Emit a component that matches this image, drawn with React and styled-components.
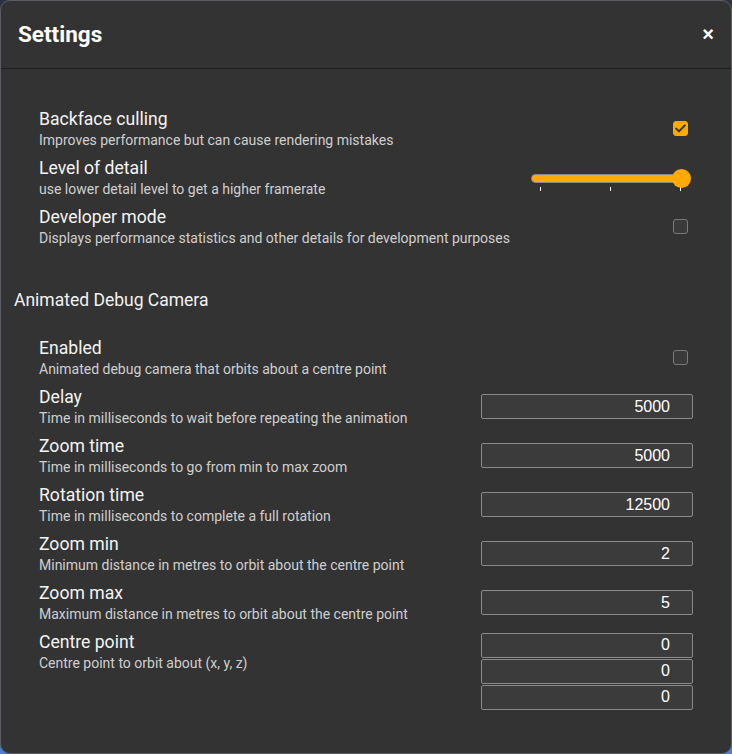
import React from "react";
import styled, { createGlobalStyle } from "styled-components";

const GlobalStyle = createGlobalStyle`
  html, body {
    margin: 0;
    padding: 0;
    height: 100%;
  }
  body {
    background: linear-gradient(180deg, #2b3140 0%, #33415c 60%, #4a7fd8 100%);
    font-family: Roboto, "Noto Sans", sans-serif;
  }
`;

const Dialog = styled.div`
  box-sizing: border-box;
  width: 732px;
  height: 754px;
  background: #333333;
  border: 1px solid #5a5d63;
  border-radius: 10px;
  display: flex;
  flex-direction: column;
  overflow: hidden;
  color: #f2f2f2;
`;

const Header = styled.div`
  height: 68px;
  flex: none;
  display: flex;
  align-items: center;
  justify-content: space-between;
  padding: 0 17px 2px 17px;
  box-sizing: border-box;
  border-bottom: 1px solid #1e1e1e;
`;

const Title = styled.h1`
  margin: 0;
  font-size: 22.5px;
  font-weight: 700;
  color: #ffffff;
`;

const Close = styled.button`
  background: none;
  border: none;
  color: #ffffff;
  font-family: "Liberation Sans", Arial, sans-serif;
  font-size: 20px;
  font-weight: 700;
  padding: 0;
  line-height: 1;
  cursor: pointer;
`;

const Content = styled.div`
  padding: 35px 38px 0 13px;
  display: flex;
  flex-direction: column;
`;

const Group = styled.div`
  display: flex;
  flex-direction: column;
  padding-left: 25px;
`;

const SectionTitle = styled.h2`
  margin: 37px 0 21px;
  font-size: 17.5px;
  font-weight: 400;
  line-height: 24px;
  color: #f2f2f2;
`;

const Row = styled.div`
  min-height: 49px;
  box-sizing: border-box;
  padding: 4.5px 0;
  display: flex;
  align-items: ${(p) => (p.$top ? "flex-start" : "center")};
  justify-content: space-between;
`;

const Text = styled.div`
  flex: 1;
  min-width: 0;
  white-space: nowrap;
  display: flex;
  flex-direction: column;
`;

const Label = styled.div`
  font-size: 17.6px;
  line-height: 21px;
  margin-bottom: 2px;
  color: #f4f4f4;
`;

const Desc = styled.div`
  font-size: 14px;
  line-height: 17px;
  color: #cfcfcf;
`;

const Control = styled.div`
  flex: none;
  width: 212px;
  display: flex;
  flex-direction: column;
  align-items: flex-end;
  gap: 1px;
  margin-top: ${(p) => (p.$top ? "1px" : "0")};
`;

const Check = styled.div`
  width: 15px;
  height: 15px;
  margin-right: 5px;
  border-radius: 3px;
  box-sizing: border-box;
  border: 1px solid ${(p) => (p.$on ? "#ffaa00" : "#7a7a7a")};
  background: ${(p) => (p.$on ? "#ffaa00" : "#3a3a3a")};
  display: flex;
  align-items: center;
  justify-content: center;
`;

const NumInput = styled.input`
  box-sizing: border-box;
  width: 212px;
  height: 25px;
  background: #3b3b3b;
  border: 1px solid #8a8a8a;
  border-radius: 2px;
  color: #ffffff;
  font-family: "Liberation Sans", Arial, sans-serif;
  font-size: 16px;
  text-align: right;
  padding: 0 22px 0 4px;
  outline: none;
`;

const Slider = styled.div`
  width: 160px;
  margin-right: 2px;
  margin-top: 10px;
  display: flex;
  flex-direction: column;
`;

const Track = styled.div`
  position: relative;
  height: 9px;
  box-sizing: border-box;
  border-radius: 5px;
  background: #ffaa00;
  border: 1px solid #8a8a8a;
  margin-right: 2px;
`;

const Thumb = styled.div`
  position: absolute;
  right: -3px;
  top: 50%;
  width: 19px;
  height: 19px;
  margin-top: -9.5px;
  border-radius: 50%;
  background: #ffaa00;
`;

const Ticks = styled.div`
  display: flex;
  justify-content: space-between;
  padding: 0 10px 0 9px;
  margin-top: 4px;
`;

const Tick = styled.span`
  width: 1px;
  height: 4px;
  background: #ffffff;
`;

const basic = [
  { label: "Backface culling", desc: "Improves performance but can cause rendering mistakes", kind: "check", on: true },
  { label: "Level of detail", desc: "use lower detail level to get a higher framerate", kind: "slider" },
  { label: "Developer mode", desc: "Displays performance statistics and other details for development purposes", kind: "check", on: false },
];

const camera = [
  { label: "Enabled", desc: "Animated debug camera that orbits about a centre point", kind: "check", on: false },
  { label: "Delay", desc: "Time in milliseconds to wait before repeating the animation", kind: "num", values: ["5000"] },
  { label: "Zoom time", desc: "Time in milliseconds to go from min to max zoom", kind: "num", values: ["5000"] },
  { label: "Rotation time", desc: "Time in milliseconds to complete a full rotation", kind: "num", values: ["12500"] },
  { label: "Zoom min", desc: "Minimum distance in metres to orbit about the centre point", kind: "num", values: ["2"] },
  { label: "Zoom max", desc: "Maximum distance in metres to orbit about the centre point", kind: "num", values: ["5"] },
  { label: "Centre point", desc: "Centre point to orbit about (x, y, z)", kind: "num", values: ["0", "0", "0"] },
];

function Setting({ item }) {
  const top = item.values && item.values.length > 1;
  return (
    <Row $top={top}>
      <Text>
        <Label>{item.label}</Label>
        <Desc>{item.desc}</Desc>
      </Text>
      <Control $top={top}>
        {item.kind === "check" && (
          <Check $on={item.on}>
            {item.on && (
              <svg width="11" height="9" viewBox="0 0 11 9">
                <path d="M1.2 4.6 L4 7.4 L9.8 1.4" fill="none" stroke="#333" strokeWidth="2" strokeLinecap="round" strokeLinejoin="round" />
              </svg>
            )}
          </Check>
        )}
        {item.kind === "slider" && (
          <Slider>
            <Track>
              <Thumb />
            </Track>
            <Ticks>
              <Tick />
              <Tick />
              <Tick />
            </Ticks>
          </Slider>
        )}
        {item.kind === "num" &&
          item.values.map((v, i) => <NumInput key={i} type="text" defaultValue={v} />)}
      </Control>
    </Row>
  );
}

export default function App() {
  return (
    <>
      <GlobalStyle />
      <Dialog>
        <Header>
          <Title>Settings</Title>
          <Close>×</Close>
        </Header>
        <Content>
          <Group>
            {basic.map((item) => (
              <Setting key={item.label} item={item} />
            ))}
          </Group>
          <SectionTitle>Animated Debug Camera</SectionTitle>
          <Group>
            {camera.map((item) => (
              <Setting key={item.label} item={item} />
            ))}
          </Group>
        </Content>
      </Dialog>
    </>
  );
}
